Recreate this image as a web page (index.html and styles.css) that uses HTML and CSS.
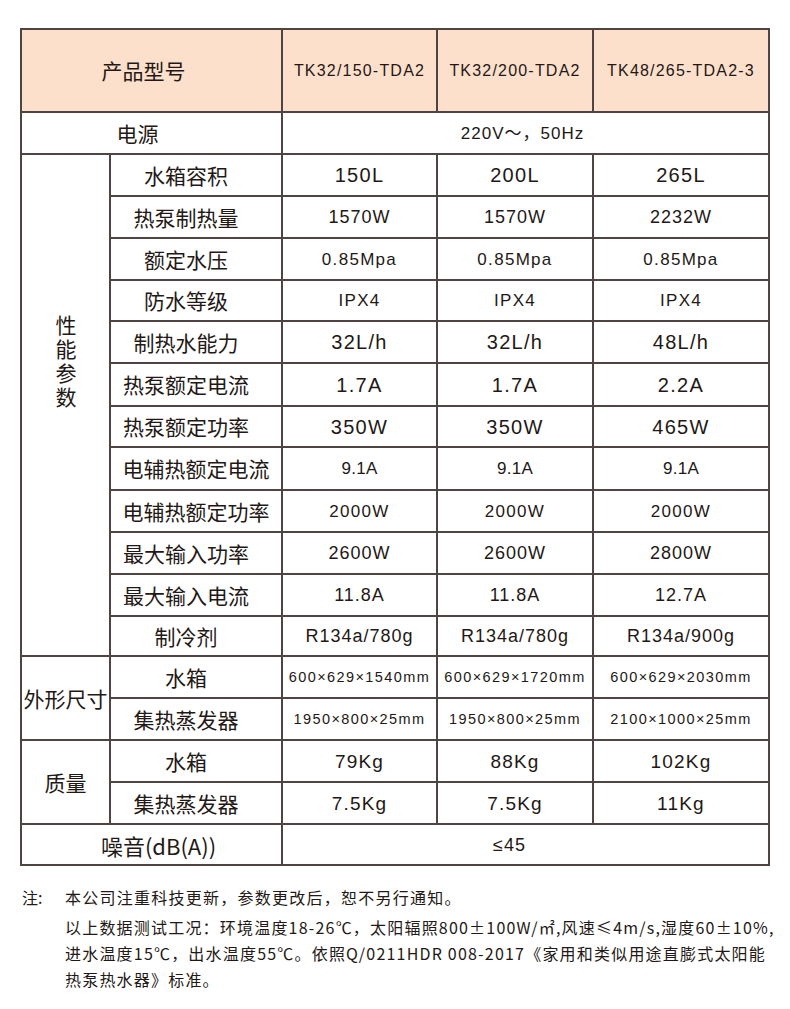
FILE: index.html
```html
<!DOCTYPE html>
<html lang="zh-CN">
<head>
<meta charset="utf-8">
<title>产品参数</title>
<link rel="stylesheet" href="styles.css">
</head>
<body>
<div class="page">
  <table class="spec">
    <colgroup>
      <col class="c-cat"><col class="c-label"><col class="c-a"><col class="c-b"><col class="c-c">
    </colgroup>
    <tbody>
      <tr class="r-head">
        <th colspan="2" class="zh head-title">产品型号</th>
        <th class="model">TK32/150-TDA2</th>
        <th class="model">TK32/200-TDA2</th>
        <th class="model">TK48/265-TDA2-3</th>
      </tr>
      <tr class="r42">
        <td colspan="2" class="zh power-title">电源</td>
        <td colspan="3" class="val v-power">220V～，50Hz</td>
      </tr>
      <tr class="r42">
        <td rowspan="12" class="zh cat cat-perf"><span class="vert">性能参数</span></td>
        <td class="zh label">水箱容积</td>
        <td class="val v-lg">150L</td><td class="val v-lg">200L</td><td class="val v-lg">265L</td>
      </tr>
      <tr class="r42">
        <td class="zh label">热泵制热量</td>
        <td class="val v-md">1570W</td><td class="val v-md">1570W</td><td class="val v-md">2232W</td>
      </tr>
      <tr class="r42">
        <td class="zh label">额定水压</td>
        <td class="val v-sm">0.85Mpa</td><td class="val v-sm">0.85Mpa</td><td class="val v-sm">0.85Mpa</td>
      </tr>
      <tr class="r41">
        <td class="zh label">防水等级</td>
        <td class="val v-sm">IPX4</td><td class="val v-sm">IPX4</td><td class="val v-sm">IPX4</td>
      </tr>
      <tr class="r42">
        <td class="zh label">制热水能力</td>
        <td class="val v-lg">32L/h</td><td class="val v-lg">32L/h</td><td class="val v-lg">48L/h</td>
      </tr>
      <tr class="r43">
        <td class="zh label">热泵额定电流</td>
        <td class="val v-lg">1.7A</td><td class="val v-lg">1.7A</td><td class="val v-lg">2.2A</td>
      </tr>
      <tr class="r41">
        <td class="zh label">热泵额定功率</td>
        <td class="val v-lg">350W</td><td class="val v-lg">350W</td><td class="val v-lg">465W</td>
      </tr>
      <tr class="r43">
        <td class="zh label wide">电辅热额定电流</td>
        <td class="val v-sm tight">9.1A</td><td class="val v-sm tight">9.1A</td><td class="val v-sm tight">9.1A</td>
      </tr>
      <tr class="r42">
        <td class="zh label wide">电辅热额定功率</td>
        <td class="val v-sm">2000W</td><td class="val v-sm">2000W</td><td class="val v-sm">2000W</td>
      </tr>
      <tr class="r42">
        <td class="zh label">最大输入功率</td>
        <td class="val v-md">2600W</td><td class="val v-md">2600W</td><td class="val v-md">2800W</td>
      </tr>
      <tr class="r42">
        <td class="zh label">最大输入电流</td>
        <td class="val v-md">11.8A</td><td class="val v-md">11.8A</td><td class="val v-md">12.7A</td>
      </tr>
      <tr class="r40">
        <td class="zh label">制冷剂</td>
        <td class="val v-md">R134a/780g</td><td class="val v-md">R134a/780g</td><td class="val v-md">R134a/900g</td>
      </tr>
      <tr class="r42">
        <td rowspan="2" class="zh cat cat-size">外形尺寸</td>
        <td class="zh label">水箱</td>
        <td class="val v-xs">600×629×1540mm</td><td class="val v-xs">600×629×1720mm</td><td class="val v-xs">600×629×2030mm</td>
      </tr>
      <tr class="r42">
        <td class="zh label">集热蒸发器</td>
        <td class="val v-xs">1950×800×25mm</td><td class="val v-xs">1950×800×25mm</td><td class="val v-xs">2100×1000×25mm</td>
      </tr>
      <tr class="r42">
        <td rowspan="2" class="zh cat">质量</td>
        <td class="zh label">水箱</td>
        <td class="val v-wt">79Kg</td><td class="val v-wt">88Kg</td><td class="val v-wt">102Kg</td>
      </tr>
      <tr class="r42">
        <td class="zh label">集热蒸发器</td>
        <td class="val v-wt">7.5Kg</td><td class="val v-wt">7.5Kg</td><td class="val v-wt">11Kg</td>
      </tr>
      <tr class="r41">
        <td colspan="2" class="zh noise-title">噪音(dB(A))</td>
        <td colspan="3" class="val v-noise">≤45</td>
      </tr>
    </tbody>
  </table>

  <div class="notes">
    <div class="note-mark">注:</div>
    <div class="note-body">
      <p class="note-p1">本公司注重科技更新，参数更改后，恕不另行通知。</p>
      <p class="note-p2">以上数据测试工况：环境温度18-26℃，太阳辐照800±100W/㎡,风速≤4m/s,湿度60±10%,<br>进水温度15℃，出水温度55℃。依照Q/0211HDR 008-2017《家用和类似用途直膨式太阳能<br>热泵热水器》标准。</p>
    </div>
  </div>
</div>
</body>
</html>
```

FILE: styles.css
```css
html, body {
  margin: 0;
  padding: 0;
  background: #ffffff;
}

body {
  font-family: "Liberation Sans", "Noto Sans CJK SC", sans-serif;
  color: #231815;
}

.page {
  padding: 28px 0 0 20px;
  width: 790px;
  box-sizing: border-box;
}

.spec {
  border-collapse: collapse;
  table-layout: fixed;
  width: 750px;
}

th,
td {
  border: 2px solid #4f4442;
  padding: 0;
  text-align: center;
  vertical-align: middle;
  font-weight: normal;
  white-space: nowrap;
  overflow: visible;
}

.c-cat { width: 89px; }
.c-label { width: 172px; }
.c-a { width: 155px; }
.c-b { width: 156px; }
.c-c { width: 176px; }

.r-head { height: 83px; }
.r-head th { background: #fde0cc; }
.r40 { height: 40px; }
.r41 { height: 41px; }
.r42 { height: 42px; }
.r43 { height: 43px; }

.zh {
  font-family: "Noto Sans CJK SC", "Liberation Sans", sans-serif;
  font-size: 21px;
  line-height: 1;
}

.head-title { padding-right: 16px; }
.power-title { padding-right: 28px; }
.noise-title { padding-left: 14px; font-size: 22px; }

.label { padding-right: 20px; }
.label.wide { padding-right: 0; padding-left: 0; }

.cat { font-size: 21px; }

.cat-perf {
  vertical-align: top;
  padding-top: 160px;
}

.vert {
  display: inline-block;
  vertical-align: top;
  writing-mode: vertical-lr;
  font-size: 21px;
  letter-spacing: 3px;
  line-height: 1;
}

.model {
  font-family: "Liberation Sans", sans-serif;
  font-size: 16px;
  letter-spacing: 1.2px;
}

.val {
  font-family: "Liberation Sans", "Noto Sans CJK SC", sans-serif;
  line-height: 1;
}

.v-power { font-size: 17px; letter-spacing: 1px; padding-right: 6px; }
.v-lg { font-size: 20px; letter-spacing: 1.3px; }
.v-md { font-size: 18px; letter-spacing: 1px; }
.v-sm { font-size: 17px; letter-spacing: 1.3px; }
.v-sm.tight { letter-spacing: 0.3px; }
.v-xs { font-size: 14.5px; letter-spacing: 1.4px; }
.v-wt { font-size: 19px; letter-spacing: 1.2px; }
.v-noise { font-size: 18px; letter-spacing: 1px; padding-right: 32px; }

.notes {
  display: flex;
  margin-top: 18px;
  margin-left: 2px;
  font-family: "Noto Sans CJK SC", "Liberation Sans", sans-serif;
  font-size: 16px;
  line-height: 26px;
  color: #231815;
}

.note-mark {
  width: 43px;
  flex: none;
}

.note-body p {
  margin: 0;
  white-space: nowrap;
}

.note-p1 { letter-spacing: 1.25px; }

.note-p2 {
  margin-top: 4px !important;
  letter-spacing: 1.2px;
}
```
